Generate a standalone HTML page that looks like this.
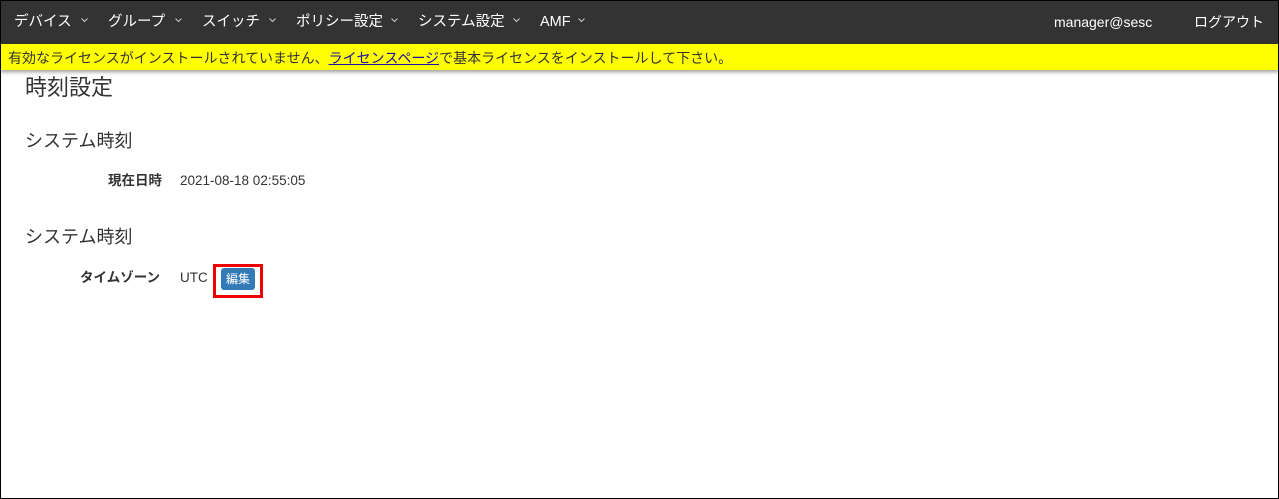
<!DOCTYPE html>
<html><head><meta charset="utf-8"><style>
*{margin:0;padding:0;box-sizing:border-box}
body{width:1279px;height:499px;overflow:hidden;background:#fff;font-family:"Liberation Sans","Noto Sans CJK JP",sans-serif;color:#333;position:relative}
.frame{position:absolute;left:0;top:0;width:1279px;height:499px;border:1px solid #000;pointer-events:none;z-index:5}
.nav{position:absolute;left:0;top:0;width:1279px;height:44px;background:#333;color:#fff;font-size:14.5px}
.nav span{position:absolute;top:12px;white-space:nowrap;line-height:20px}
.nav svg{position:absolute;top:18px}
.warn{position:absolute;left:0;top:44px;width:1279px;height:26px;background:#ff0;font-size:14px;line-height:16px;color:#333;padding:6px 0 0 8px;box-shadow:0 2px 4px rgba(0,0,0,.4);white-space:nowrap}
.warn a{color:#1a0dab;text-decoration:underline}
.t{position:absolute;white-space:nowrap;line-height:18px}
.btn{position:absolute;left:221px;top:268px;width:34px;height:22px;background:#337ab7;border-radius:3px;color:#fff;font-size:12px;text-align:center;line-height:22px}
.red{position:absolute;left:213px;top:264px;width:50px;height:34px;border:3px solid #e00}
</style></head><body>
<div class="nav">
<span style="left:14px">デバイス</span>
<span style="left:108px">グループ</span>
<span style="left:202px">スイッチ</span>
<span style="left:296px">ポリシー設定</span>
<span style="left:418px">システム設定</span>
<span style="left:540px">AMF</span>
<svg style="left:81px" width="7" height="5"><path d="M0.5 0.5L3.5 3.5L6.5 0.5" stroke="#ccc" fill="none"/></svg>
<svg style="left:175px" width="7" height="5"><path d="M0.5 0.5L3.5 3.5L6.5 0.5" stroke="#ccc" fill="none"/></svg>
<svg style="left:269px" width="7" height="5"><path d="M0.5 0.5L3.5 3.5L6.5 0.5" stroke="#ccc" fill="none"/></svg>
<svg style="left:391px" width="7" height="5"><path d="M0.5 0.5L3.5 3.5L6.5 0.5" stroke="#ccc" fill="none"/></svg>
<svg style="left:513px" width="7" height="5"><path d="M0.5 0.5L3.5 3.5L6.5 0.5" stroke="#ccc" fill="none"/></svg>
<svg style="left:578px" width="7" height="5"><path d="M0.5 0.5L3.5 3.5L6.5 0.5" stroke="#ccc" fill="none"/></svg>
<span style="left:1054px;font-size:14px">manager@sesc</span>
<span style="left:1194px;font-size:14px">ログアウト</span>
</div>
<div class="warn">有効なライセンスがインストールされていません、<a>ライセンスページ</a>で基本ライセンスをインストールして下さい。</div>
<div class="t" style="left:25px;top:75px;font-size:22px;line-height:26px">時刻設定</div>
<div class="t" style="left:25px;top:130px;font-size:18px;line-height:22px">システム時刻</div>
<div class="t" style="left:108px;top:172px;font-size:13.5px;font-weight:bold">現在日時</div>
<div class="t" style="left:180px;top:172px;font-size:13.5px">2021-08-18 02:55:05</div>
<div class="t" style="left:25px;top:226px;font-size:18px;line-height:22px">システム時刻</div>
<div class="t" style="left:80px;top:269px;font-size:13.5px;font-weight:bold">タイムゾーン</div>
<div class="t" style="left:180px;top:269px;font-size:13.5px">UTC</div>
<div class="btn">編集</div>
<div class="red"></div>
<div class="frame"></div>
</body></html>
